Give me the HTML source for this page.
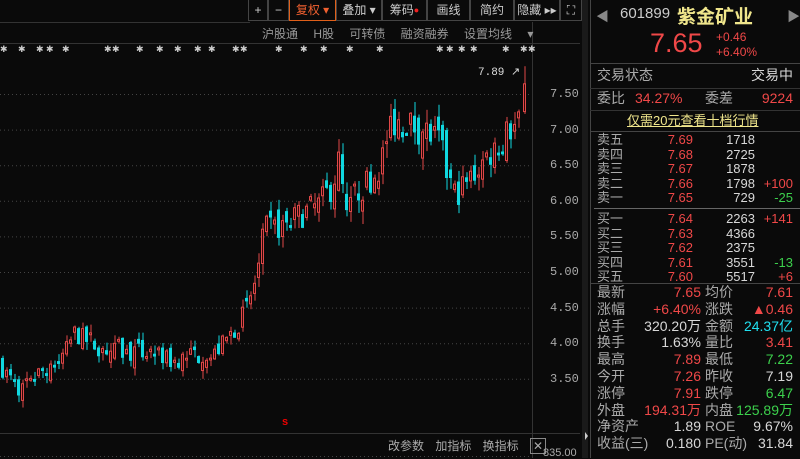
<!DOCTYPE html>
<html><head><meta charset="utf-8">
<style>
*{margin:0;padding:0;box-sizing:border-box}
body{width:800px;height:458px;background:#0a0a0a;overflow:hidden;position:relative;font-family:"Liberation Sans","Noto Sans CJK SC",sans-serif;color:#ccc}
.a{position:absolute;white-space:nowrap}
.tb{position:absolute;top:0;height:21px;border:1px solid #444;border-top:none;font-size:12px;color:#ccc;text-align:center;line-height:20px}
.r{color:#f04848}.g{color:#3cd04c}.w{color:#d8d8d8}.c{color:#20e0f0}.lbl{color:#aaa}
.row{position:absolute;left:597px;width:196px;font-size:13px;height:17px;line-height:17px}
.row span{position:absolute}
.big{font-size:14px}
</style></head><body>
<svg class="a" style="left:0;top:0" width="800" height="458" id="sv">
<line x1="0" y1="22.5" x2="250" y2="22.5" stroke="#333"/>
<line x1="0" y1="43.5" x2="580" y2="43.5" stroke="#333"/>
<line x1="532.5" y1="22" x2="532.5" y2="458" stroke="#333"/>
<line x1="0" y1="433.5" x2="580" y2="433.5" stroke="#333"/>
<line x1="590.5" y1="0" x2="590.5" y2="458" stroke="#444"/>
<rect x="582" y="0" width="6" height="458" fill="#1a1a1a"/>
<line x1="590" y1="63.5" x2="800" y2="63.5" stroke="#444"/>
<line x1="590" y1="88.5" x2="800" y2="88.5" stroke="#333"/>
<line x1="590" y1="110.5" x2="800" y2="110.5" stroke="#333"/>
<line x1="590" y1="131.5" x2="800" y2="131.5" stroke="#444"/>
<line x1="594" y1="208.5" x2="800" y2="208.5" stroke="#666"/>
<line x1="590" y1="283.5" x2="800" y2="283.5" stroke="#444"/>
<g id="grid"></g><g id="cd"></g>
<polygon points="585,432 588,436 585,440" fill="#ccc"/>
</svg>
<div class="tb" style="left:248px;width:20px">+</div>
<div class="tb" style="left:268px;width:21px">−</div>
<div class="tb" style="left:289px;width:47px;color:#f06030;border-color:#e0601a;border-top:none">复权 ▾</div>
<div class="tb" style="left:336px;width:46px">叠加 ▾</div>
<div class="tb" style="left:382px;width:45px">筹码<span style="color:#f02020;font-size:9px;vertical-align:top">●</span></div>
<div class="tb" style="left:427px;width:43px">画线</div>
<div class="tb" style="left:470px;width:44px">简约</div>
<div class="tb" style="left:514px;width:46px">隐藏 ▸▸</div>
<div class="tb" style="left:560px;width:22px">⛶</div>
<div class="a" style="left:262px;top:25px;font-size:12px;color:#999;word-spacing:12px">沪股通 H股 可转债 融资融券 设置均线 ▾</div>
<div class="a" id="stars" style="left:0;top:44px;font-size:9px;color:#ccc"></div>
<div class="a" style="left:478px;top:65px;font-size:11px;color:#ddd;font-family:'Liberation Mono',monospace">7.89 ↗</div>
<div class="a" id="ax" style="left:550px;top:0;font-family:'Liberation Mono',monospace;font-size:12px;color:#aaa"></div>
<div class="a" style="left:282px;top:416px;font-size:11px;color:#e00;font-weight:bold">s</div>
<div class="a" style="left:388px;top:437px;font-size:12px;color:#aaa;word-spacing:8px">改参数 加指标 换指标 <span style="border:1px solid #888;padding:0 2px">✕</span></div>
<div class="a" style="left:543px;top:447px;font-size:11px;color:#aaa">835.00</div>

<div class="a" style="left:596px;top:6px;font-size:13px;color:#888">◀</div>
<div class="a" style="left:620px;top:5px;font-size:15px;color:#ccc">601899</div>
<div class="a" style="left:677px;top:2px;font-size:19px;color:#f0e68c;font-weight:bold">紫金矿业</div>
<div class="a" style="left:787px;top:6px;font-size:13px;color:#888">▶</div>
<div class="a r" style="left:650px;top:28px;font-size:27px">7.65</div>
<div class="a r" style="left:716px;top:30px;font-size:12px;line-height:15px">+0.46<br>+6.40%</div>
<div class="row big" style="top:67px"><span class="lbl" style="left:0">交易状态</span><span class="w" style="right:0">交易中</span></div>
<div class="row big" style="top:90px"><span class="lbl" style="left:0">委比</span><span class="r" style="left:38px">34.27%</span><span class="lbl" style="left:108px">委差</span><span class="r" style="right:0">9224</span></div>
<div class="row" style="top:112px;font-size:13px"><span style="left:30px;color:#f0e68c;text-decoration:underline">仅需20元查看十档行情</span></div>
<div id="ob"></div>
<div id="st"></div>
<script>
var s=document.getElementById('sv'),cd=document.getElementById('cd'),gr=document.getElementById('grid'),NS='http://www.w3.org/2000/svg';
function Y(p){return 94+(7.5-p)*71.2}
var ax='';[7.5,7,6.5,6,5.5,5,4.5,4,3.5].forEach(function(p){var y=Y(p);var l=document.createElementNS(NS,'line');l.setAttribute('x1',0);l.setAttribute('x2',532);l.setAttribute('y1',y+.5);l.setAttribute('y2',y+.5);l.setAttribute('stroke','#444');l.setAttribute('stroke-dasharray','1,3');gr.appendChild(l);ax+='<div style="position:absolute;top:'+(y-7)+'px">'+p.toFixed(2)+'</div>'});
var l2=document.createElementNS(NS,'line');l2.setAttribute('x1',0);l2.setAttribute('x2',532);l2.setAttribute('y1',456.5);l2.setAttribute('y2',456.5);l2.setAttribute('stroke','#444');l2.setAttribute('stroke-dasharray','1,3');gr.appendChild(l2);
document.getElementById('ax').innerHTML=ax;
var K=[[0,3.7],[8,3.55],[15,3.4],[22,3.35],[35,3.55],[50,3.7],[65,3.85],[75,4.15],[90,4.0],[110,3.9],[135,3.85],[155,3.9],[170,3.75],[200,3.85],[215,3.85],[235,4.2],[248,4.5],[258,5.0],[265,5.6],[285,5.65],[300,5.8],[320,5.95],[332,6.2],[340,6.6],[346,5.7],[355,6.1],[370,6.3],[382,6.55],[392,7.15],[405,7.1],[425,7.0],[440,6.8],[447,6.4],[455,6.1],[468,6.25],[480,6.5],[495,6.75],[510,7.0],[522,7.1]];
function P(x){for(var i=1;i<K.length;i++)if(x<=K[i][0]){var a=K[i-1],b=K[i];return a[1]+(b[1]-a[1])*(x-a[0])/(b[0]-a[0])}return 7.1}
var seed=7;function rnd(){seed=(seed*16807)%2147483647;return seed/2147483647}
function R(x,y,w,h,f,st){var r=document.createElementNS(NS,'rect');r.setAttribute('x',x);r.setAttribute('y',y);r.setAttribute('width',w);r.setAttribute('height',Math.max(h,1));r.setAttribute('fill',f);if(st){r.setAttribute('stroke',st);r.setAttribute('stroke-width',1)}cd.appendChild(r)}
var prev=P(0);
for(var x=1;x<520;x+=4){var sc=P(x)/5;var c=P(x+2)+(rnd()-0.5)*0.35*sc,o=prev+(rnd()-0.5)*0.3*sc;if(Math.abs(c-o)<0.04)c=o+0.04*(rnd()>.5?1:-1);var hi=Math.max(o,c)+rnd()*0.15*sc,lo=Math.min(o,c)-rnd()*0.15*sc;var up=c>=o;var col=up?'#e04848':'#10d8e0';
R(x+1.5,Y(hi),1,Y(lo)-Y(hi),col);
if(up)R(x+.5,Y(c)+.5,2,Y(o)-Y(c)-1,'#300808',col);else R(x,Y(o),3,Y(c)-Y(o),col);prev=c}
R(524.5,Y(7.89),1,Y(7.22)-Y(7.89),'#e04848');R(523.5,Y(7.65)+.5,2,Y(7.26)-Y(7.65),'#300808','#e04848');
var st='';var pos=[0,18,36,46,62,104,112,136,156,174,194,208,232,240,275,300,320,346,376,436,446,458,470,502,520,528];pos.forEach(function(p){st+='<span style="position:absolute;left:'+p+'px">✱</span>'});document.getElementById('stars').innerHTML=st;
var ob=[['卖五','7.69','1718',''],['卖四','7.68','2725',''],['卖三','7.67','1878',''],['卖二','7.66','1798','+100'],['卖一','7.65','729','-25'],['买一','7.64','2263','+141'],['买二','7.63','4366',''],['买三','7.62','2375',''],['买四','7.61','3551','-13'],['买五','7.60','5517','+6']];
var h='';ob.forEach(function(r,i){var t=132+i*14.6+(i>=5?6:0);h+='<div class="row" style="top:'+t+'px;height:15px;line-height:15px"><span class="lbl" style="left:0">'+r[0]+'</span><span class="r" style="right:100px">'+r[1]+'</span><span class="w" style="right:38px">'+r[2]+'</span><span class="'+(r[3][0]=='-'?'g':'r')+'" style="right:0">'+r[3]+'</span></div>'});
document.getElementById('ob').innerHTML=h;
var S=[['最新','7.65','r','均价','7.61','r'],['涨幅','+6.40%','r','涨跌','▲0.46','r'],['总手','320.20万','w','金额','24.37亿','c'],['换手','1.63%','w','量比','3.41','r'],['最高','7.89','r','最低','7.22','g'],['今开','7.26','r','昨收','7.19','w'],['涨停','7.91','r','跌停','6.47','g'],['外盘','194.31万','r','内盘','125.89万','g'],['净资产','1.89','w','ROE','9.67%','w'],['收益(三)','0.180','w','PE(动)','31.84','w']];
h='';S.forEach(function(r,i){var t=284+i*16.8;h+='<div class="row big" style="top:'+t+'px"><span class="lbl" style="left:0">'+r[0]+'</span><span class="'+r[2]+'" style="right:92px">'+r[1]+'</span><span class="lbl" style="left:108px">'+r[3]+'</span><span class="'+r[5]+'" style="right:0">'+r[4]+'</span></div>'});
document.getElementById('st').innerHTML=h;
</script>
</body></html>
